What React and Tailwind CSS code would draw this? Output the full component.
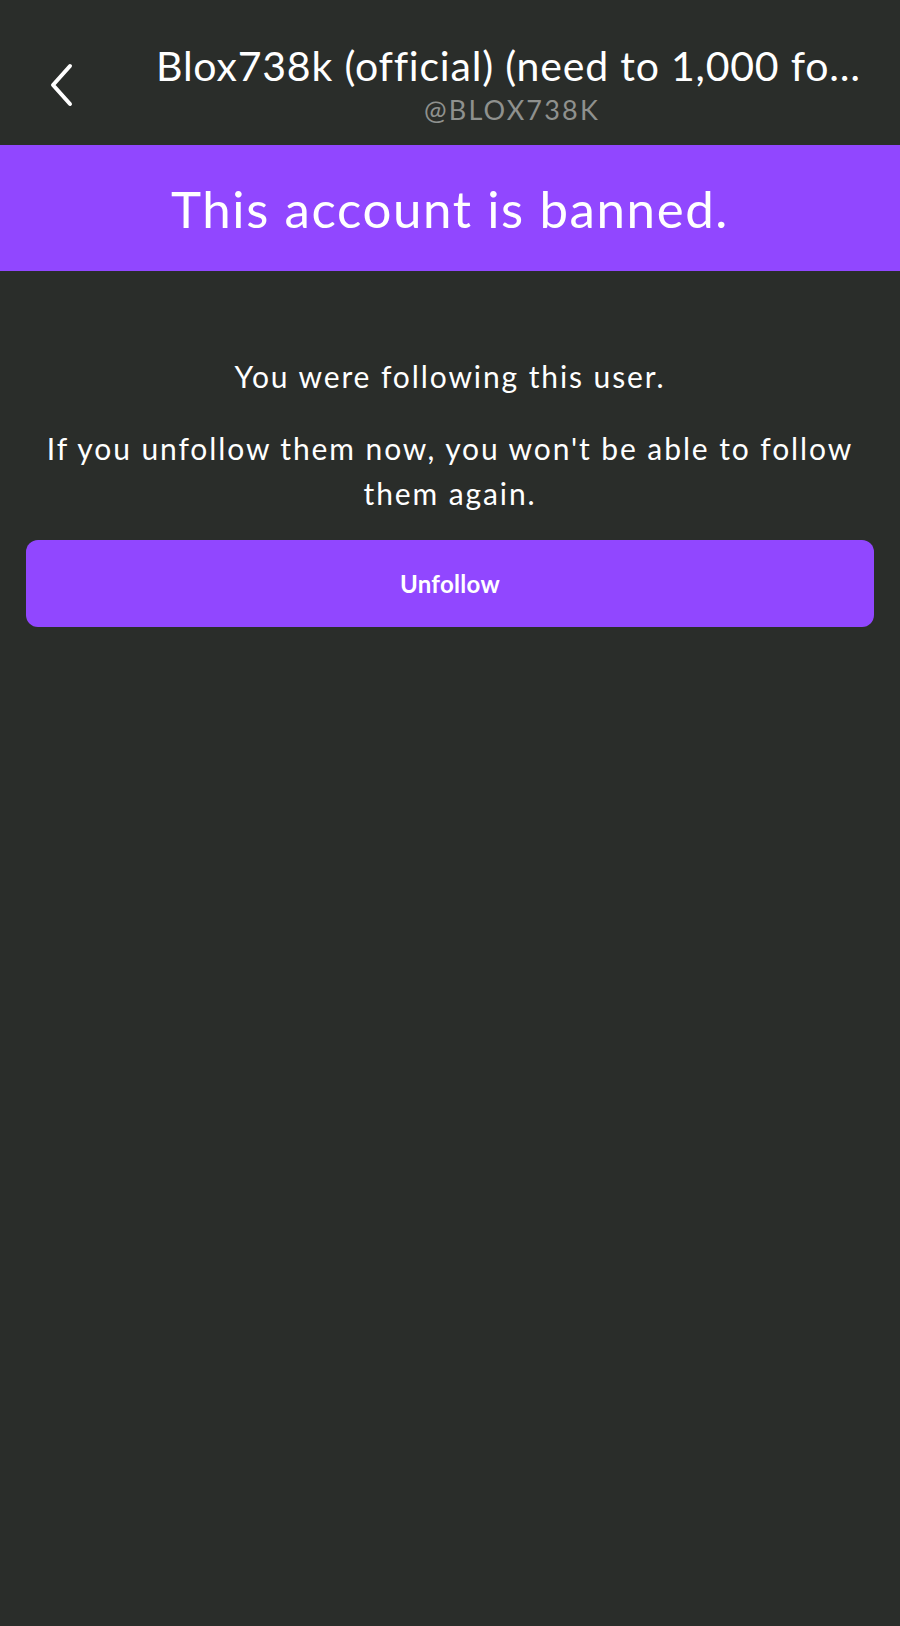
export default function App() {
	return (
		<div className="min-h-[1626px] w-full bg-[#2a2d2a] text-white" style={{ fontFamily: "Lato, 'Noto Sans', sans-serif" }}>
			{/* Top bar */}
			<header className="flex h-[145px] items-start">
				<button className="ml-[44px] mt-[62px] flex h-[46px] w-[34px] items-center justify-center">
					<svg width="26" height="44" viewBox="0 0 26 44" fill="none">
						<path d="M22 3 L5 22 L22 41" stroke="white" strokeWidth="4" strokeLinecap="round" strokeLinejoin="round" />
					</svg>
				</button>
				<div className="ml-[78px] mr-[32px] mt-[41px] min-w-0 flex-1 text-center">
					<div className="truncate text-[41px] leading-[50px] tracking-[0.8px] text-white">
						Blox738k (official) (need to 1,000 followers)
					</div>
					<div className="mt-[3px] text-[27px] leading-[32px] tracking-[2.2px] text-[#8f918e]">@BLOX738K</div>
				</div>
			</header>

			{/* Banned banner */}
			<div className="flex h-[126px] items-center justify-center bg-[#9147ff]">
				<h1 className="text-[51px] font-normal leading-none tracking-[1.6px]">This account is banned.</h1>
			</div>

			{/* Body */}
			<main className="px-[26px] pt-[85px] text-center">
				<p className="text-[30px] leading-[40px] tracking-[1.9px]">You were following this user.</p>
				<p className="mt-[30px] px-[18px] text-[30px] leading-[45px] tracking-[1.9px]">
					If you unfollow them now, you won't be able to follow them again.
				</p>
				<button className="mt-[24px] flex h-[87px] w-full items-center justify-center rounded-[12px] bg-[#9147ff] text-[24px] font-bold tracking-[0.3px] text-white">
					Unfollow
				</button>
			</main>
		</div>
	);
}
